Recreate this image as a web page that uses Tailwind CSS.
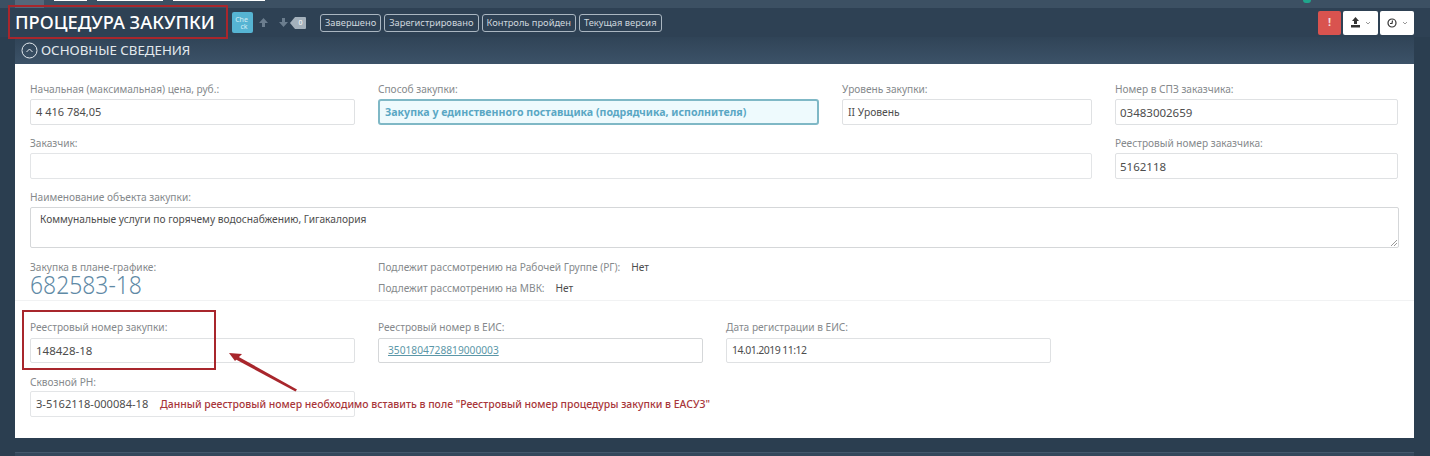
<!DOCTYPE html>
<html lang="ru"><head><meta charset="utf-8">
<script src="https://cdn.jsdelivr.net/npm/@tailwindcss/browser@4"></script>
</head>
<body class="m-0 h-[456px] w-[1430px] overflow-hidden bg-[#2b3e50] font-['Noto_Sans','Open_Sans',sans-serif] text-[#4d4d4d]">
<div class="relative h-[456px] w-[1430px] overflow-hidden">
  <!-- top strip -->
  <div class="flex h-[8px] items-start gap-[10px] bg-[#3c5063] pl-[15px]">
    <div class="h-[8px] w-[29px] bg-[#55677a]"></div>
    <div class="h-[1px] w-[33px] bg-white"></div>
    <div class="h-[1px] w-[66px] bg-white"></div>
    <div class="h-[1px] w-[92px] bg-white"></div>
    <div class="ml-auto mr-[119px] flex items-center gap-[3px]"><div class="h-[3px] w-[8px] rounded-b-full bg-[#20a58c]"></div></div>
  </div>
  <!-- title bar -->
  <div class="flex h-[29px] items-center bg-[#2e4154] pr-[16px] pl-[15px]">
    <h1 class="m-0 w-[217px] text-[18.300px] leading-none font-medium whitespace-nowrap text-white">ПРОЦЕДУРА ЗАКУПКИ</h1>
    <div class="flex h-[21px] w-[21px] flex-col items-center justify-center rounded-[2px] bg-[#56b4d3] pr-[2px] text-[7px] leading-[7px] text-[#d5eef6]"><span>Che</span><span class="pl-[5px]">ck</span></div>
    <svg class="ml-[5px]" width="11" height="11" viewBox="0 0 11 11" fill="#6b7d8e"><path d="M5.500 1 10 6H7v4H4V6H1z"/></svg>
    <svg class="ml-[9px]" width="11" height="11" viewBox="0 0 11 11" fill="#6b7d8e"><path d="M5.500 10 10 5H7V1H4v4H1z"/></svg>
    <svg class="ml-[1px]" width="16" height="12" viewBox="0 0 16 12" fill="#a4b1bc"><path d="M5 0h10a1 1 0 0 1 1 1v10a1 1 0 0 1-1 1H5L0 6z"/></svg>
    <div class="relative -ml-[11px] w-[11px] text-center text-[7px] leading-none text-white">0</div>
    <div class="ml-[14px] flex gap-[3px]">
      <span class="flex h-[18px] items-center rounded-[3px] border border-[#aab6c1] px-[4px] text-[9.300px] leading-none text-[#cfd7de]">Завершено</span>
      <span class="flex h-[18px] items-center rounded-[3px] border border-[#aab6c1] px-[4px] text-[9.300px] leading-none text-[#cfd7de]">Зарегистрировано</span>
      <span class="flex h-[18px] items-center rounded-[3px] border border-[#aab6c1] px-[4px] text-[9.300px] leading-none text-[#cfd7de]">Контроль пройден</span>
      <span class="flex h-[18px] items-center rounded-[3px] border border-[#aab6c1] px-[4px] text-[9.300px] leading-none text-[#cfd7de]">Текущая версия</span>
    </div>
    <div class="ml-auto flex gap-[2px]">
      <div class="flex h-[24px] w-[23px] items-center justify-center rounded-[2px] bg-[#d9534f] text-[11px] font-bold text-[#f5dcdc]">!</div>
      <div class="flex h-[24px] w-[35px] items-center justify-center gap-[4px] rounded-[2px] bg-white">
        <svg width="11" height="11" viewBox="0 0 11 11" fill="#333"><path d="M5.500 0 9 4H7v3H4V4H2zM1 8h9v2.500H1z"/></svg>
        <svg width="6" height="4" viewBox="0 0 6 4" fill="none" stroke="#999"><path d="m1 1 2 2 2-2"/></svg>
      </div>
      <div class="flex h-[24px] w-[34px] items-center justify-center gap-[5px] rounded-[2px] bg-white">
        <svg width="10" height="10" viewBox="0 0 10 10" fill="none" stroke="#333" stroke-width="1.200"><circle cx="5" cy="5" r="4"/><path d="M5.500 2.500 5 5.500H3"/></svg>
        <svg width="6" height="4" viewBox="0 0 6 4" fill="none" stroke="#999"><path d="m1 1 2 2 2-2"/></svg>
      </div>
    </div>
  </div>
  <!-- section -->
  <div class="ml-[15px] w-[1399px]">
    <div class="flex h-[27px] items-center gap-[3px] bg-gradient-to-b from-[#304457] to-[#3c5268] pl-[6px] text-[13.300px] leading-none text-[#e3e9ee]">
      <svg width="17" height="17" viewBox="0 0 17 17" fill="none" stroke="#e3e9ee"><circle cx="8.500" cy="8.500" r="7.500"/><path d="m5.500 10 3-3 3 3"/></svg>
      <span>ОСНОВНЫЕ СВЕДЕНИЯ</span>
    </div>
    <div class="h-[374px] bg-white pt-[19px] text-[10.150px] text-[#85898c]">
      <div class="flex gap-[23px] px-[15px]">
        <div class="w-[325px]"><div class="h-[16px] leading-[12px]">Начальная (максимальная) цена, руб.:</div><div class="flex h-[26px] items-center rounded-[2px] border border-[#dfe1e3] px-[5px] pt-px text-[11px] text-[#4d4d4d]">4 416 784,05</div></div>
        <div class="w-[441px]"><div class="h-[16px] leading-[12px]">Способ закупки:</div><div class="flex h-[26px] items-center rounded-[3px] border-2 border-[#7fb8c6] bg-[#eefafd] px-[5px] pt-px text-[10.600px] font-bold text-[#5aa7c4]">Закупка у единственного поставщика (подрядчика, исполнителя)</div></div>
        <div class="w-[250px]"><div class="h-[16px] leading-[12px]">Уровень закупки:</div><div class="flex h-[26px] items-center rounded-[2px] border border-[#dfe1e3] px-[5px] pt-px text-[10.300px] text-[#4d4d4d]">II Уровень</div></div>
        <div class="w-[283px]"><div class="h-[16px] leading-[12px]">Номер в СПЗ заказчика:</div><div class="flex h-[26px] items-center rounded-[2px] border border-[#dfe1e3] px-[4px] pt-px text-[11.500px] text-[#4d4d4d]">03483002659</div></div>
      </div>
      <div class="mt-[12px] flex gap-[23px] px-[15px]">
        <div class="w-[1062px]"><div class="h-[16px] leading-[12px]">Заказчик:</div><div class="h-[26px] rounded-[2px] border border-[#e3e5e7]"></div></div>
        <div class="w-[283px]"><div class="h-[16px] leading-[12px]">Реестровый номер заказчика:</div><div class="flex h-[26px] items-center rounded-[2px] border border-[#dfe1e3] px-[4px] pt-px text-[11.500px] text-[#4d4d4d]">5162118</div></div>
      </div>
      <div class="mt-[12px] px-[15px]">
        <div class="h-[16px] leading-[12px]">Наименование объекта закупки:</div>
        <div class="relative h-[41px] rounded-[2px] border border-[#d5d7d9] px-[9px] pt-[4px] text-[10.200px] text-[#4d4d4d]">Коммунальные услуги по горячему водоснабжению, Гигакалория
          <svg class="absolute right-[1px] bottom-[1px]" width="7" height="7" viewBox="0 0 7 7" stroke="#999"><path d="M1 7 7 1M4 7l3-3"/></svg>
        </div>
      </div>
      <div class="mt-[13px] flex gap-[23px] px-[15px]">
        <div class="h-[34px] w-[325px]"><div class="h-[12px] leading-[12px]">Закупка в плане-графике:</div><div class="mt-px h-[20px] origin-left scale-x-[0.88] text-[26px] leading-[20px] font-light whitespace-nowrap text-[#5f8aa6]">682583-18</div></div>
        <div class="flex flex-col gap-[9px] pt-px">
          <div class="flex h-[12px] items-center"><span>Подлежит рассмотрению на Рабочей Группе (РГ):</span><span class="ml-[11px] text-[#4d4d4d]">Нет</span></div>
          <div class="flex h-[12px] items-center"><span>Подлежит рассмотрению на МВК:</span><span class="ml-[11px] text-[#4d4d4d]">Нет</span></div>
        </div>
      </div>
      <div class="mt-[5px] h-px bg-[#f1f2f3]"></div>
      <div class="mt-[20px] flex gap-[23px] px-[15px]">
        <div class="w-[325px]"><div class="h-[17px] leading-[12px]">Реестровый номер закупки:</div><div class="flex h-[25px] items-center rounded-[2px] border border-[#dfe1e3] px-[5px] text-[11.500px] text-[#4d4d4d]">148428-18</div></div>
        <div class="w-[325px]"><div class="h-[17px] leading-[12px]">Реестровый номер в ЕИС:</div><div class="flex h-[25px] items-center rounded-[2px] border border-[#d5d7d9] px-[9px] text-[10.200px] text-[#5b97a8] underline">3501804728819000003</div></div>
        <div class="w-[325px]"><div class="h-[17px] leading-[12px]">Дата регистрации в ЕИС:</div><div class="flex h-[25px] items-center rounded-[2px] border border-[#dfe1e3] px-[5px] text-[10.500px] tracking-[-0.550px] text-[#4d4d4d]">14.01.2019 11:12</div></div>
      </div>
      <div class="mt-[13px] px-[15px]">
        <div class="h-[15px] leading-[12px]">Сквозной РН:</div>
        <div class="flex h-[26px] w-[325px] items-center rounded-[2px] border border-[#e3e5e7] px-[5px] pt-px text-[11.100px] text-[#4d4d4d]">3-5162118-000084-18</div>
      </div>
    </div>
  </div>
  <div class="absolute top-[452px] left-[15px] h-[4px] w-[1399px] border-t border-[#44586c] bg-[#34485c]"></div>
  <!-- annotations -->
  <div class="absolute top-[5px] left-[8px] h-[34px] w-[220px] border-[2px] border-[#a8262c]"></div>
  <div class="absolute top-[310px] left-[22px] h-[60px] w-[194px] border-[2px] border-[#a8262c]"></div>
  <svg class="absolute top-[345px] left-[225px]" width="80" height="50" viewBox="0 0 80 50" fill="#a8262c" stroke="none"><path d="M4 8 17 9l-7 7z"/><path d="M12 11 72 44.500 70.500 46.500 10 14z"/></svg>
  <div class="absolute top-[396px] left-[160px] text-[10.430px] leading-[16px] font-medium whitespace-nowrap text-[#a8363a]">Данный реестровый номер необходимо вставить в поле "Реестровый номер процедуры закупки в ЕАСУЗ"</div>
</div>
</body></html>
